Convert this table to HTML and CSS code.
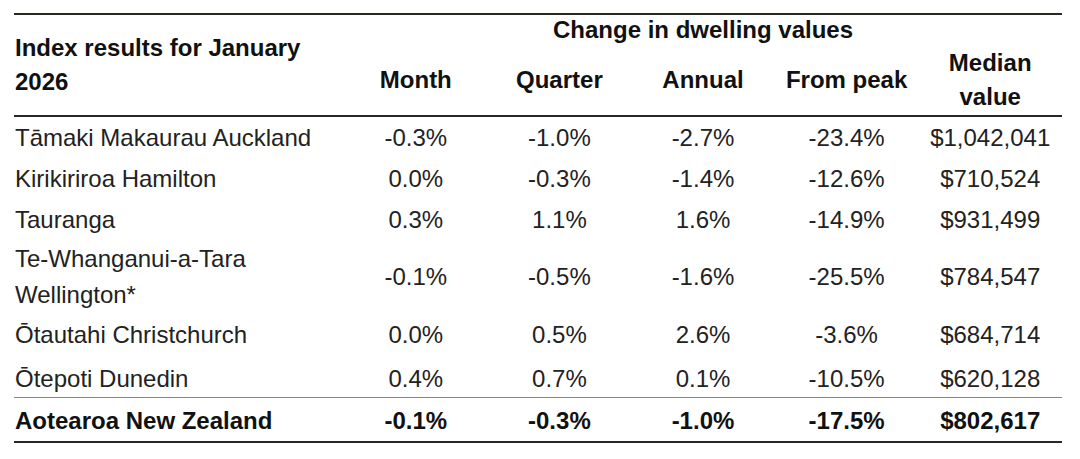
FILE: index.html
```html
<!DOCTYPE html>
<html lang="en">
<head>
<meta charset="utf-8">
<title>Index results for January 2026</title>
<link rel="stylesheet" href="styles.css">
</head>
<body>
<div class="wrap">
<table class="results">
  <colgroup>
    <col class="c-name">
    <col class="c-val"><col class="c-val"><col class="c-val"><col class="c-val"><col class="c-val">
  </colgroup>
  <thead>
    <tr class="h1">
      <th class="title" rowspan="2">Index results for January 2026</th>
      <th class="group" colspan="5">Change in dwelling values</th>
    </tr>
    <tr class="h2">
      <th>Month</th>
      <th>Quarter</th>
      <th>Annual</th>
      <th>From peak</th>
      <th>Median value</th>
    </tr>
  </thead>
  <tbody>
    <tr><td class="name">Tāmaki Makaurau Auckland</td><td>-0.3%</td><td>-1.0%</td><td>-2.7%</td><td>-23.4%</td><td>$1,042,041</td></tr>
    <tr><td class="name">Kirikiriroa Hamilton</td><td>0.0%</td><td>-0.3%</td><td>-1.4%</td><td>-12.6%</td><td>$710,524</td></tr>
    <tr><td class="name">Tauranga</td><td>0.3%</td><td>1.1%</td><td>1.6%</td><td>-14.9%</td><td>$931,499</td></tr>
    <tr class="tall"><td class="name">Te-Whanganui-a-Tara Wellington*</td><td>-0.1%</td><td>-0.5%</td><td>-1.6%</td><td>-25.5%</td><td>$784,547</td></tr>
    <tr><td class="name">Ōtautahi Christchurch</td><td>0.0%</td><td>0.5%</td><td>2.6%</td><td>-3.6%</td><td>$684,714</td></tr>
    <tr class="last"><td class="name">Ōtepoti Dunedin</td><td>0.4%</td><td>0.7%</td><td>0.1%</td><td>-10.5%</td><td>$620,128</td></tr>
  </tbody>
  <tfoot>
    <tr class="total"><td class="name">Aotearoa New Zealand</td><td>-0.1%</td><td>-0.3%</td><td>-1.0%</td><td>-17.5%</td><td>$802,617</td></tr>
  </tfoot>
</table>
</div>
</body>
</html>
```
FILE: styles.css
```css
html, body {
  margin: 0;
  padding: 0;
  background: #ffffff;
}

.wrap {
  padding: 13px 18px 0 14px;
}

.results {
  width: 1048px;
  table-layout: fixed;
  border-collapse: collapse;
  font-family: "Liberation Sans", Arial, sans-serif;
  font-size: 24px;
  line-height: 34px;
  color: #222222;
}

.c-name { width: 330px; }
.c-val { width: 143.6px; }

.results thead {
  border-top: 2px solid #2a2622;
  border-bottom: 2px solid #2a2622;
}

.results th {
  font-weight: bold;
  color: #111111;
  text-align: center;
  vertical-align: middle;
  padding: 0;
}

.results th.title {
  text-align: left;
  padding-left: 1px;
}

.h1 th.group {
  line-height: 28px;
  padding: 1px 0 1px;
  vertical-align: top;
}

.h2 th {
  height: 70px;
}

.results td {
  text-align: center;
  vertical-align: middle;
  padding: 4px 0 3px;
}

.results td.name {
  text-align: left;
  padding-left: 1px;
}

.tall td {
  line-height: 36px;
  padding: 1px 0 1px;
}

.last td {
  padding: 7px 0 1px;
}

.results tfoot {
  border-top: 1px solid #8a8784;
  border-bottom: 2px solid #2a2622;
}

.total td {
  font-weight: bold;
  color: #111111;
  padding: 6px 0 3px;
}
```
